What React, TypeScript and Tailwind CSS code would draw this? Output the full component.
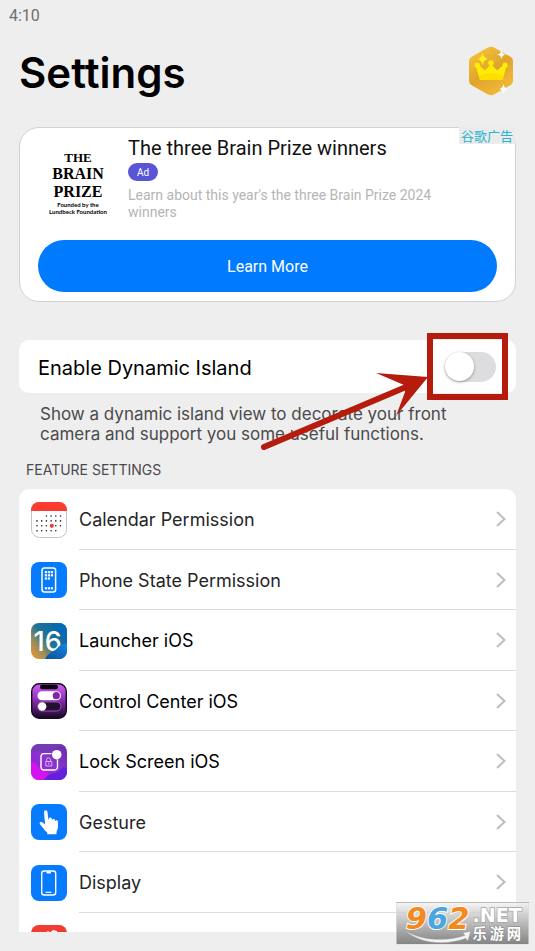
import { useId, type ReactNode } from "react";

function Tile({ children }: { children: ReactNode }) {
  return (
    <svg viewBox="0 0 36 36" className="size-9 shrink-0" aria-hidden="true">
      {children}
    </svg>
  );
}

function CalendarIcon() {
  const dots: ReactNode[] = [];
  for (let row = 0; row < 4; row++) {
    for (let col = 0; col < 6; col++) {
      if (row === 0 && col < 2) continue;
      if (row === 3 && col > 4) continue;
      dots.push(
        <circle key={`${row}-${col}`} cx={6 + col * 4.7} cy={14 + row * 4.9} r="0.8" fill="#222" />
      );
    }
  }
  return (
    <Tile>
      <rect x="0.5" y="0.5" width="35" height="35" rx="8" fill="#fff" stroke="#c4c4c6" />
      <path d="M0 9V8a8 8 0 0 1 8-8h20a8 8 0 0 1 8 8v1Z" fill="#fc3b30" />
      {dots}
      <circle cx="20.8" cy="23.8" r="2.1" fill="#e8413b" />
    </Tile>
  );
}

function PhoneStateIcon() {
  const keys: ReactNode[] = [];
  for (let row = 0; row < 4; row++) {
    for (let col = 0; col < 3; col++) {
      if (row === 2 && col === 2) continue;
      keys.push(
        <rect
          key={`${row}-${col}`}
          x={13.8 + col * 3}
          y={row === 3 ? 25.2 : 9 + row * 3.2}
          width="2.2"
          height="2.2"
          fill="#fff"
        />
      );
    }
  }
  return (
    <Tile>
      <rect width="36" height="36" rx="8" fill="#077bfe" />
      <rect x="11" y="6" width="13.6" height="24" rx="2.5" fill="none" stroke="#fff" strokeWidth="1.5" />
      {keys}
    </Tile>
  );
}

function LauncherIcon() {
  const id = useId();
  return (
    <Tile>
      <defs>
        <linearGradient id={`${id}a`} x1="0" y1="0.9" x2="0.8" y2="0.2">
          <stop offset="0" stopColor="#e5973a" />
          <stop offset="0.3" stopColor="#9a8c58" />
          <stop offset="0.6" stopColor="#1e7396" />
          <stop offset="1" stopColor="#0c69a8" />
        </linearGradient>
        <linearGradient id={`${id}b`} x1="0" y1="1" x2="1" y2="0">
          <stop offset="0" stopColor="#0b4e9d" />
          <stop offset="1" stopColor="#1685df" />
        </linearGradient>
        <clipPath id={`${id}c`}>
          <rect width="36" height="36" rx="8" />
        </clipPath>
      </defs>
      <g clipPath={`url(#${id}c)`}>
        <rect width="36" height="36" fill={`url(#${id}a)`} />
        <path d="M20 0H36V17Q29 10 20 0Z" fill="#0869b4" />
        <text x="2.5" y="28" fontSize="27" fontWeight="500" fill="#fff" className="font-['Inter',sans-serif]">
          16
        </text>
        <path d="M14 36C17 30 22 29 26 25.5C29 22 32 20 36 21V36Z" fill={`url(#${id}b)`} />
      </g>
    </Tile>
  );
}

function ControlCenterIcon() {
  const id = useId();
  return (
    <Tile>
      <defs>
        <linearGradient id={id} x1="0" y1="0" x2="0" y2="1">
          <stop offset="0" stopColor="#cf62f0" />
          <stop offset="0.4" stopColor="#9a35c4" />
          <stop offset="1" stopColor="#160620" />
        </linearGradient>
      </defs>
      <rect x="0.7" y="0.7" width="34.6" height="34.6" rx="7.5" fill={`url(#${id})`} stroke="#1b0827" strokeWidth="1.4" />
      <rect x="9" y="1.8" width="18" height="4.4" rx="2.2" fill="#09030e" />
      <rect x="6.5" y="8.2" width="23.5" height="9" rx="4.5" fill="#fff" />
      <circle cx="25.3" cy="12.7" r="3.6" fill="#7d27ab" />
      <rect x="6.5" y="19" width="23.5" height="9" rx="4.5" fill="#241030" stroke="#a95bc8" strokeWidth="0.9" />
      <circle cx="11.2" cy="23.5" r="4.2" fill="#fff" />
    </Tile>
  );
}

function LockScreenIcon() {
  const id = useId();
  return (
    <Tile>
      <defs>
        <linearGradient id={`${id}a`} x1="0" y1="1" x2="1" y2="0">
          <stop offset="0" stopColor="#a313d4" />
          <stop offset="0.5" stopColor="#8a35cf" />
          <stop offset="1" stopColor="#6a2ba6" />
        </linearGradient>
        <clipPath id={`${id}b`}>
          <rect width="36" height="36" rx="8" />
        </clipPath>
      </defs>
      <g clipPath={`url(#${id}b)`}>
        <rect width="36" height="36" fill={`url(#${id}a)`} />
        <path d="M0 9C8 4 12 12 20 6S32 2 36 4V0H0Z" fill="#733bb4" />
        <path d="M0 18C6 17 7 25 13 27S20 32 22 36H0Z" fill="#d414ee" />
        <path d="M13 36C18 27 25 31 29 26S34 24 36 24V36Z" fill="#6420dc" />
        <path d="M20.5 9.6H13a3 3 0 0 0-3 3V23a3 3 0 0 0 3 3H23.5a3 3 0 0 0 3-3V15.5" fill="none" stroke="#fff" strokeWidth="1.4" />
        <circle cx="25.7" cy="10.7" r="4.8" fill="#fff" />
        <path d="M15.5 17.5V15.8a2 2 0 0 1 4 0V17.5M14.8 17.5h6v4.5h-6ZM17.8 18.5v2" fill="none" stroke="#e1b9f2" strokeWidth="0.9" />
      </g>
    </Tile>
  );
}

function GestureIcon() {
  return (
    <Tile>
      <rect width="36" height="36" rx="8" fill="#077bfe" />
      <path
        d="M13 8.2C12.7 5.8 16 5.3 16.4 7.7L17.6 16.2L18 14.4C18.5 12.9 20.9 13.3 20.9 15V16.3C21.3 14.3 24 14.5 24 16.4V17.3C24.6 15.6 27 16 27 17.8V22.5C27 25.2 26 26.3 25.5 28V30.2H16.2V28.5C14 26.6 11.7 23.5 9.2 20.4C7.7 18.5 9.5 17.2 11.2 18.3L14.1 20.5Z"
        fill="#fff"
      />
    </Tile>
  );
}

function DisplayIcon() {
  return (
    <Tile>
      <rect width="36" height="36" rx="8" fill="#077bfe" />
      <rect x="10.7" y="6" width="14" height="24" rx="2.5" fill="none" stroke="#fff" strokeWidth="1.4" />
      <path d="M15.5 6.5v1.2q0 .8.8.8h2.9q.8 0 .8-.8V6.5Z" fill="#fff" />
      <path d="M14.5 27.3h6" stroke="#fff" strokeWidth="1.1" />
    </Tile>
  );
}

function SoundIcon() {
  return (
    <Tile>
      <rect width="36" height="36" rx="8" fill="#f23b32" />
      <path d="M14 8.5L17 6L19 7.5L22 5L26 6V20H14Z" fill="#fff" />
    </Tile>
  );
}

function PremiumIcon() {
  const id = useId();
  return (
    <svg viewBox="0 0 46 50" className="h-[50px] w-[46px]" aria-hidden="true">
      <defs>
        <linearGradient id={id} x1="0.2" y1="0" x2="0.8" y2="1">
          <stop offset="0" stopColor="#f6c23a" />
          <stop offset="0.5" stopColor="#dfa52c" />
          <stop offset="1" stopColor="#f5bd3a" />
        </linearGradient>
      </defs>
      <path
        d="M20 1.5Q23 0 26 1.5L42 10.5Q45 12.2 45 15.5V34.5Q45 37.8 42 39.5L26 48.5Q23 50 20 48.5L4 39.5Q1 37.8 1 34.5V15.5Q1 12.2 4 10.5Z"
        fill={`url(#${id})`}
      />
      <path
        d="M12 34L8.3 21.8A2.7 2.7 0 1 1 11.8 20L17 24.5L21.6 19.5A2.8 2.8 0 1 1 24.4 19.5L29 24.5L34.5 20A2.7 2.7 0 1 1 38 21.8L34.5 34Z"
        fill="#ffed08"
      />
      <path d="M11 29.5Q23 24.5 35.8 29.5L34.5 34H12Z" fill="#ffdf00" />
      <path d="M14.5 6.5Q15.4 12 20 13Q15.4 14 14.5 19Q13.6 14 9.5 13Q13.6 12 14.5 6.5Z" fill="#fff312" />
      <path d="M33.5 4Q34 8 37.5 8.5Q34 9 33.5 13Q33 9 29 8.5Q33 8 33.5 4ZM35.5 38Q36.2 42.5 40 43Q36.2 43.5 35.5 48Q34.8 43.5 31 43Q34.8 42.5 35.5 38Z" fill="#fff" />
    </svg>
  );
}

const features = [
  { label: "Calendar Permission", icon: <CalendarIcon /> },
  { label: "Phone State Permission", icon: <PhoneStateIcon /> },
  { label: "Launcher iOS", icon: <LauncherIcon />, strong: true },
  { label: "Control Center iOS", icon: <ControlCenterIcon />, strong: true },
  { label: "Lock Screen iOS", icon: <LockScreenIcon />, strong: true },
  { label: "Gesture", icon: <GestureIcon /> },
  { label: "Display", icon: <DisplayIcon /> },
];

function FeatureRow({ label, icon, strong }: { label: string; icon: ReactNode; strong?: boolean }) {
  return (
    <li className="flex odd:h-[61px] even:h-[60px]">
      <button type="button" className="flex w-full items-center gap-3 pl-3 text-left">
        {icon}
        <span className="flex h-full flex-1 items-center justify-between border-b border-[#dcdcde] pr-2">
          <span className={strong ? "pt-0.5 text-lg text-black" : "pt-0.5 text-lg text-[#252527]"}>{label}</span>
          <svg viewBox="0 0 14 18" className="h-[18px] w-3.5" fill="none" stroke="#bdbdc1" strokeWidth="2" aria-hidden="true">
            <path d="M3 2L10.5 9L3 16" />
          </svg>
        </span>
      </button>
    </li>
  );
}

function AdCard() {
  return (
    <section className="relative mt-7 rounded-[20px] border border-[#d2d2d4] bg-white px-[18px] pt-2 pb-[9px] font-['Roboto',sans-serif]">
      <div className="flex h-26 gap-5">
        <div className="flex w-[70px] shrink-0 flex-col items-center pt-3.5 pl-2.5 text-center text-black">
          <div className="font-['Liberation_Serif',serif] font-bold">
            <p className="text-[13px] leading-[15px]">THE</p>
            <p className="text-base leading-[18px]">BRAIN</p>
            <p className="text-base leading-[18px]">PRIZE</p>
          </div>
          <p className="font-['Lato',sans-serif] text-[6px] leading-[7px] font-bold whitespace-nowrap">
            Founded by the
            <br />
            Lundbeck Foundation
          </p>
        </div>
        <div className="min-w-0 flex-1">
          <h2 className="text-xl leading-6 text-[#111]">The three Brain Prize winners</h2>
          <span className="mt-[3px] flex h-[18px] w-[30px] items-center justify-center rounded-full bg-[#5856d6] text-[10px] text-white">
            Ad
          </span>
          <p className="mt-1.5 max-w-[330px] text-sm leading-[17px] text-[#b5b5b5]">
            Learn about this year's the three Brain Prize 2024 winners
          </p>
        </div>
      </div>
      <button type="button" className="h-[52px] w-full rounded-full bg-[#007aff] pt-0.5 text-base text-white">
        Learn More
      </button>
      <span className="absolute -top-px right-0 bg-[#ebebeb] px-0.5 font-['Noto_Sans_CJK_SC',sans-serif] text-[13px] leading-[17px] text-[#27b4cc]">
        谷歌广告
      </span>
    </section>
  );
}

function SiteMark() {
  return (
    <div className="absolute right-1.5 bottom-1.5 h-[43px] w-[133px] border border-[#dedede]/60 bg-linear-to-b from-[#f0f0f0]/70 to-[#858585]">
      <svg viewBox="0 0 133 43" className="h-full w-full overflow-visible" role="img" aria-label="962.NET 乐游网">
        <text
          x="7"
          y="27"
          fontSize="32"
          fontWeight="700"
          fontStyle="italic"
          stroke="#fff"
          strokeWidth="2"
          paintOrder="stroke"
          className="font-['DejaVu_Sans',sans-serif]"
        >
          <tspan fill="#f28a20">9</tspan>
          <tspan fill="#4ba6e0">6</tspan>
          <tspan fill="#f28a20">2</tspan>
        </text>
        <text x="77" y="20" fontSize="20" fontWeight="700" fill="#fff" stroke="#a4a4a4" strokeWidth="1.5" paintOrder="stroke" className="font-['DejaVu_Sans',sans-serif]">
          .NET
        </text>
        <text y="38" fontSize="15" fontWeight="700" fill="#fff" stroke="#858585" strokeWidth="1" paintOrder="stroke" className="font-['Noto_Sans_CJK_SC',sans-serif]">
          <tspan x="77">乐</tspan>
          <tspan x="95">游</tspan>
          <tspan x="113">网</tspan>
        </text>
        <path d="M7 29C22 39 48 41 69 34L67 31L75 30L72 40L70 37C46 46 19 41 7 29Z" fill="#f4f4f4" stroke="#a0a0a0" strokeWidth="0.5" />
      </svg>
    </div>
  );
}

export default function App() {
  return (
    <div className="relative flex h-screen flex-col overflow-hidden bg-[#eeeeee] px-[19px] pb-[19px] font-['Inter',sans-serif]">
      <p className="-ml-2.5 pt-1.5 font-['Roboto',sans-serif] text-base leading-5 text-[#6e6e6e]">4:10</p>

      <header className="mt-5 flex items-center justify-between">
        <h1 className="text-[42px] leading-[53px] font-semibold text-black">Settings</h1>
        <button type="button" aria-label="Premium" className="mr-0.5 -mt-1">
          <PremiumIcon />
        </button>
      </header>

      <AdCard />

      <section className="mt-[38px]">
        <div className="relative flex h-[53px] items-center justify-between rounded-[10px] bg-white pr-5 pl-[19px]">
          <label htmlFor="dynamic-island" className="pt-0.5 text-xl text-black">
            Enable Dynamic Island
          </label>
          <input
            id="dynamic-island"
            type="checkbox"
            role="switch"
            className="h-[30px] w-[51px] appearance-none rounded-full bg-[#dddde0] before:block before:size-[29px] before:rounded-full before:bg-white before:shadow-[0_1px_3px_rgba(0,0,0,0.35)] checked:bg-[#34c759] checked:before:ml-auto"
          />
          <svg viewBox="0 0 250 120" className="pointer-events-none absolute -top-2.5 right-2 h-[120px] w-[250px]" aria-hidden="true">
            <rect x="172" y="6" width="75" height="61" fill="none" stroke="#b51c0e" strokeWidth="6" />
            <path d="M6 117L148 57" stroke="#b51c0e" strokeWidth="6" strokeLinecap="round" />
            <path d="M170 47L118 43L146 55L147 62L138 86Z" fill="#b51c0e" />
          </svg>
        </div>
        <p className="mt-[11px] max-w-[450px] pl-[21px] text-[17px] leading-5 text-[#4a4a4c]">
          Show a dynamic island view to decorate your front camera and support you some useful functions.
        </p>
      </section>

      <h2 className="mt-[17px] mb-2.5 pl-[7px] text-sm leading-[18px] text-[#4a4a4c]">FEATURE SETTINGS</h2>

      <ul className="min-h-0 flex-1 overflow-hidden rounded-t-[10px] bg-white">
        {features.map((feature) => (
          <FeatureRow key={feature.label} {...feature} />
        ))}
        <li className="pt-3 pl-3">
          <button type="button" aria-label="Sound">
            <SoundIcon />
          </button>
        </li>
      </ul>

      <SiteMark />
    </div>
  );
}
